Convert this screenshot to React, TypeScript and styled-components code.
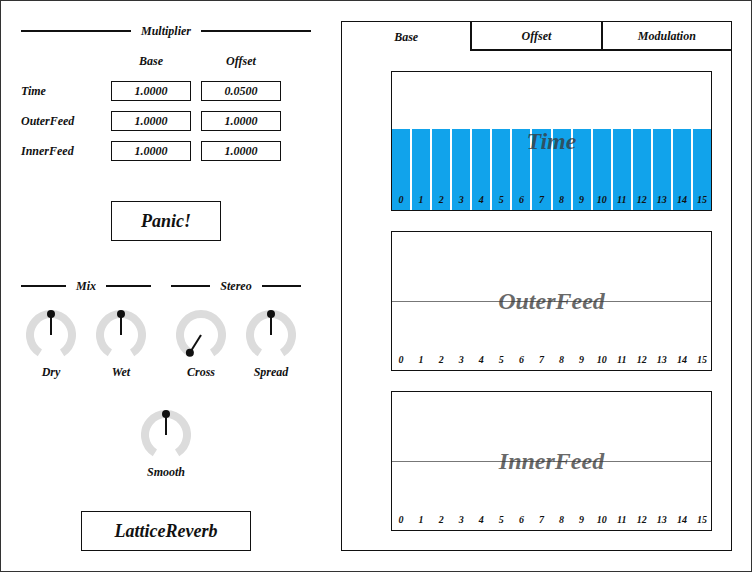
import React from 'react';
import styled, {createGlobalStyle} from 'styled-components';

const GlobalStyle = createGlobalStyle`
  html, body {
    margin: 0;
    padding: 0;
    background: #fff;
  }
  * {
    box-sizing: border-box;
  }
`;

const Window = styled.div`
  width: 752px;
  height: 572px;
  border: 1px solid #333;
  display: flex;
  align-items: flex-start;
  font-family: 'Liberation Serif', 'Times New Roman', serif;
  font-weight: bold;
  font-style: italic;
  color: #111;
  background: #fff;
`;

const LeftColumn = styled.div`
  width: 340px;
  padding: 20px 0 0 20px;
  display: flex;
  flex-direction: column;
`;

const SectionHeader = styled.div<{width: number}>`
  display: flex;
  align-items: center;
  width: ${p => p.width}px;
  height: 20px;
  font-size: 12px;
  &::before,
  &::after {
    content: '';
    flex: 1;
    height: 2px;
    background: #111;
  }
  span {
    padding: 0 10px;
  }
`;

const ParamGrid = styled.div`
  display: grid;
  grid-template-columns: 80px 80px 80px;
  grid-auto-rows: 20px;
  column-gap: 10px;
  row-gap: 10px;
  margin-top: 10px;
  font-size: 12px;
  align-items: center;
`;

const ColHead = styled.div`
  text-align: center;
`;

const RowLabel = styled.div``;

const ValueBox = styled.div`
  height: 20px;
  border: 1px solid #111;
  display: flex;
  align-items: center;
  justify-content: center;
`;

const Centered = styled.div<{top: number}>`
  width: 290px;
  display: flex;
  justify-content: center;
  margin-top: ${p => p.top}px;
`;

const BigButton = styled.div<{width: number}>`
  width: ${p => p.width}px;
  height: 40px;
  border: 1px solid #111;
  display: flex;
  align-items: center;
  justify-content: center;
  font-size: 18px;
`;

const GroupRow = styled.div`
  display: flex;
  gap: 20px;
  margin-top: 35px;
`;

const Group = styled.div`
  width: 130px;
  display: flex;
  flex-direction: column;
`;

const KnobRow = styled.div`
  display: flex;
  gap: 10px;
  margin-top: 14px;
`;

const KnobCell = styled.div`
  width: 60px;
  display: flex;
  flex-direction: column;
  align-items: center;
`;

const KnobLabel = styled.div`
  margin-top: 4px;
  height: 16px;
  line-height: 16px;
  font-size: 12px;
`;

const RightPanel = styled.div`
  margin-top: 20px;
  width: 391px;
  height: 530px;
  border: 1px solid #111;
  display: flex;
  flex-direction: column;
`;

const TabBar = styled.div`
  display: flex;
  height: 29px;
`;

const Tab = styled.div<{active?: boolean}>`
  flex: 1;
  display: flex;
  align-items: center;
  justify-content: center;
  padding-top: 1px;
  font-size: 12px;
  border-left: ${p => (p.active ? 'none' : '2px solid #111')};
  border-bottom: ${p => (p.active ? 'none' : '2px solid #111')};
`;

const ChartStack = styled.div`
  display: flex;
  flex-direction: column;
  gap: 20px;
  margin: 20px 0 0 49px;
`;

const Chart = styled.div`
  position: relative;
  width: 321px;
  height: 140px;
  border: 1px solid #111;
  background: #fff;
`;

const Columns = styled.div`
  display: flex;
  gap: 2px;
  height: 100%;
`;

const Column = styled.div`
  flex: 1;
  position: relative;
  display: flex;
  align-items: flex-end;
  justify-content: center;
`;

const Bar = styled.div`
  position: absolute;
  left: 0;
  right: 0;
  bottom: 0;
  background: #11a3eb;
`;

const Index = styled.div`
  position: relative;
  font-size: 10px;
  line-height: 14px;
  padding-bottom: 3px;
`;

const ZeroLine = styled.div`
  position: absolute;
  left: 0;
  right: 0;
  top: 69px;
  height: 1px;
  background: #777;
`;

const ChartTitle = styled.div`
  position: absolute;
  left: 50%;
  top: 50%;
  transform: translate(-50%, -50%);
  font-size: 24px;
  color: rgba(55, 55, 55, 0.75);
  white-space: nowrap;
`;

// knob sweep, degrees from straight up
const SWEEP = 148;

const Knob: React.FC<{value: number}> = ({value}) => {
  const r = 21;
  const c = 25;
  const pt = (deg: number) => {
    const a = (deg * Math.PI) / 180;
    return [c + r * Math.sin(a), c - r * Math.cos(a)];
  };
  const [sx, sy] = pt(-SWEEP);
  const [ex, ey] = pt(SWEEP);
  const [px, py] = pt(-SWEEP + 2 * SWEEP * value);
  return (
    <svg width={50} height={50} viewBox="0 0 50 50">
      <path
        d={`M ${sx} ${sy} A ${r} ${r} 0 1 1 ${ex} ${ey}`}
        fill="none"
        stroke="#dcdcdc"
        strokeWidth={8}
      />
      <line x1={c} y1={c} x2={px} y2={py} stroke="#111" strokeWidth={2} />
      <circle cx={px} cy={py} r={4} fill="#111" />
    </svg>
  );
};

const KnobControl: React.FC<{label: string; value: number}> = ({label, value}) => (
  <KnobCell>
    <Knob value={value} />
    <KnobLabel>{label}</KnobLabel>
  </KnobCell>
);

const indices = Array.from({length: 16}, (_, i) => i);

const BarChart: React.FC<{title: string; bar?: number; zero?: boolean}> = ({title, bar, zero}) => (
  <Chart>
    {zero && <ZeroLine />}
    <Columns>
      {indices.map(i => (
        <Column key={i}>
          {bar !== undefined && <Bar style={{height: bar}} />}
          <Index>{i}</Index>
        </Column>
      ))}
    </Columns>
    <ChartTitle>{title}</ChartTitle>
  </Chart>
);

const params = [
  {name: 'Time', base: '1.0000', offset: '0.0500'},
  {name: 'OuterFeed', base: '1.0000', offset: '1.0000'},
  {name: 'InnerFeed', base: '1.0000', offset: '1.0000'},
];

export default function App() {
  return (
    <>
      <GlobalStyle />
      <Window>
        <LeftColumn>
          <SectionHeader width={290}>
            <span>Multiplier</span>
          </SectionHeader>
          <ParamGrid>
            <div />
            <ColHead>Base</ColHead>
            <ColHead>Offset</ColHead>
            {params.map(p => (
              <React.Fragment key={p.name}>
                <RowLabel>{p.name}</RowLabel>
                <ValueBox>{p.base}</ValueBox>
                <ValueBox>{p.offset}</ValueBox>
              </React.Fragment>
            ))}
          </ParamGrid>
          <Centered top={40}>
            <BigButton width={110}>Panic!</BigButton>
          </Centered>
          <GroupRow>
            <Group>
              <SectionHeader width={130}>
                <span>Mix</span>
              </SectionHeader>
              <KnobRow>
                <KnobControl label="Dry" value={0.5} />
                <KnobControl label="Wet" value={0.5} />
              </KnobRow>
            </Group>
            <Group>
              <SectionHeader width={130}>
                <span>Stereo</span>
              </SectionHeader>
              <KnobRow>
                <KnobControl label="Cross" value={0} />
                <KnobControl label="Spread" value={0.5} />
              </KnobRow>
            </Group>
          </GroupRow>
          <Centered top={30}>
            <KnobControl label="Smooth" value={0.5} />
          </Centered>
          <Centered top={31}>
            <BigButton width={170}>LatticeReverb</BigButton>
          </Centered>
        </LeftColumn>
        <RightPanel>
          <TabBar>
            <Tab active>Base</Tab>
            <Tab>Offset</Tab>
            <Tab>Modulation</Tab>
          </TabBar>
          <ChartStack>
            <BarChart title="Time" bar={81} />
            <BarChart title="OuterFeed" zero />
            <BarChart title="InnerFeed" zero />
          </ChartStack>
        </RightPanel>
      </Window>
    </>
  );
}
